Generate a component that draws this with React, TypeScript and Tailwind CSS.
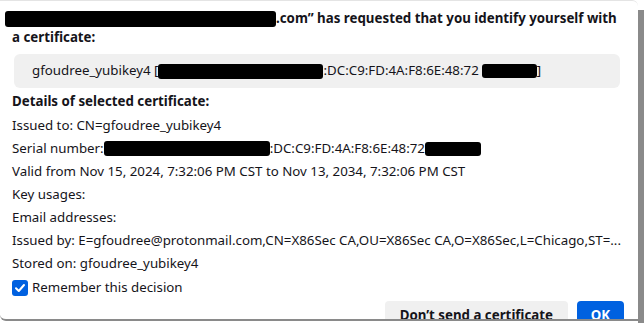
import React from "react";

const Redact = ({ w, h = 14, className = "" }: { w: number; h?: number; className?: string }) => (
	<span
		className={`inline-block bg-black rounded-[3px] align-middle ${className}`}
		style={{ width: w, height: h }}
	/>
);

const Row = ({ children }: { children: React.ReactNode }) => (
	<div className="h-[23px] flex items-center whitespace-nowrap">{children}</div>
);

export default function App() {
	return (
		<div
			className="w-[644px] h-[323px] bg-white flex overflow-hidden text-[#15141a]"
			style={{ fontFamily: '"Noto Sans", sans-serif' }}
		>
			<div className="w-[638px] h-[321px] border-t border-[#e4e4e4] border-b-2 border-b-[#8a8a8a] rounded-tr-[6px] rounded-bl-[6px] overflow-hidden flex flex-col px-3 pt-[8px]">
				<div className="text-[13.3px] font-bold leading-[19px]">
					<div className="flex items-center whitespace-nowrap">
						<Redact w={271} h={16} className="-ml-[7px]" />
						<span>.com” has requested that you identify yourself with</span>
					</div>
					<div>a certificate:</div>
				</div>

				<div className="mt-[7px] ml-[2px] w-[606px] h-[34px] shrink-0 bg-[#f0f0f0] rounded-[6px] flex items-center pl-[18px] text-[13.3px] whitespace-nowrap">
					<span>gfoudree_yubikey4 [</span>
					<Redact w={165} h={15} />
					<span>:DC:C9:FD:4A:F8:6E:48:72</span>
					<Redact w={55} h={14} className="ml-[3px]" />
					<span>]</span>
				</div>

				<div className="mt-[3px] text-[13.3px] font-bold leading-[20px]">Details of selected certificate:</div>

				<div className="text-[13.3px] mt-[3px]">
					<Row>Issued to: CN=gfoudree_yubikey4</Row>
					<Row>
						<span>Serial number:</span>
						<Redact w={166} h={15} />
						<span>:DC:C9:FD:4A:F8:6E:48:72</span>
						<Redact w={56} h={14} />
					</Row>
					<Row>Valid from Nov 15, 2024, 7:32:06 PM CST to Nov 13, 2034, 7:32:06 PM CST</Row>
					<Row>Key usages:</Row>
					<Row>Email addresses:</Row>
					<Row>Issued by: E=gfoudree@protonmail.com,CN=X86Sec CA,OU=X86Sec CA,O=X86Sec,L=Chicago,ST=...</Row>
					<Row>Stored on: gfoudree_yubikey4</Row>
					<div className="h-[26px] flex items-center gap-[4px]">
						<span className="w-[16px] h-[16px] rounded-[3px] bg-[#0061e0] flex items-center justify-center">
							<svg width="12" height="12" viewBox="0 0 12 12" fill="none">
								<path d="M2 6.2 L4.8 9 L10 3" stroke="white" strokeWidth="2" strokeLinecap="round" strokeLinejoin="round" />
							</svg>
						</span>
						<span>Remember this decision</span>
					</div>
				</div>

				<div className="flex justify-end gap-[9px] pr-[2px] text-[13.3px] font-bold">
					<button className="h-[30px] shrink-0 px-[15px] bg-[#f0f0f0] rounded-[4px] text-[#15141a]">Don’t send a certificate</button>
					<button className="h-[30px] shrink-0 w-[47px] bg-[#0061e0] rounded-[4px] text-white">OK</button>
				</div>
			</div>
			<div className="flex-1 mt-[10px] bg-[#8a8a8a]" />
		</div>
	);
}
